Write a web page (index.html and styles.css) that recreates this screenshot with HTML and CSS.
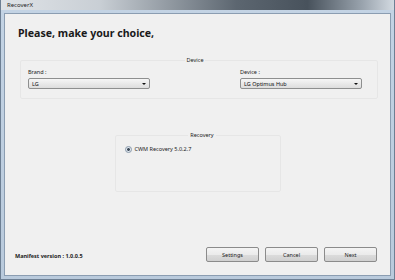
FILE: index.html
```html
<!DOCTYPE html>
<html>
<head>
  <meta charset="UTF-8">
  <link rel="stylesheet" href="styles.css">
  <title>RecoverX</title>
</head>
<body>
  <div class="window">
    <div class="titlebar">RecoverX</div>
    <div class="client">
      <h1>Please, make your choice,</h1>
      <fieldset class="group device-group">
        <legend>Device</legend>
        <div class="field">
          <label>Brand :</label>
          <div class="combo"><span>LG</span><span class="arrow"></span></div>
        </div>
        <div class="field">
          <label>Device :</label>
          <div class="combo"><span>LG Optimus Hub</span><span class="arrow"></span></div>
        </div>
      </fieldset>
      <fieldset class="group recovery-group">
        <legend>Recovery</legend>
        <div class="radio-row"><span class="radio"></span>CWM Recovery 5.0.2.7</div>
      </fieldset>
      <div class="footer">
        <div class="manifest">Manifest version : 1.0.0.5</div>
        <div class="buttons">
          <button>Settings</button>
          <button>Cancel</button>
          <button>Next</button>
        </div>
      </div>
    </div>
  </div>
</body>
</html>
```

FILE: styles.css
```css
body {
  margin: 0;
  font-family: "Noto Sans", "DejaVu Sans", sans-serif;
}
.window {
  width: 395px;
  height: 280px;
  box-sizing: border-box;
  padding: 0 3px 3px 3px;
  display: flex;
  flex-direction: column;
  background: linear-gradient(to bottom, transparent 0, transparent 10px, #c3d3e4 10px, #b9cadc 100%),
    linear-gradient(to right, #dfe3e7 0, #c9cfd5 25%, #5c6670 60%, #48525c 78%, #9aa4ae 92%, #d3dae1 100%);
  border-left: 1px solid #6d7f93;
  border-right: 1px solid #6d7f93;
  border-bottom: 1px solid #6d7f93;
}
.titlebar {
  height: 13px;
  font-size: 6px;
  line-height: 11px;
  padding-left: 3px;
  color: #222;
}
.client {
  flex: 1;
  background: #f0f0f0;
  border: 1px solid #8b9db1;
  display: flex;
  flex-direction: column;
}
h1 {
  font-size: 10.6px;
  font-weight: bold;
  margin: 10px 0 0 13px;
  line-height: 18px;
  color: #1a1a1a;
}
.group {
  border: 1px solid #e6e6e6;
  border-radius: 2px;
  margin: 0;
  padding: 0;
  box-sizing: border-box;
}
legend {
  font-size: 5.5px;
  color: #222;
  margin: 0 auto;
  padding: 0 2px;
}
.device-group {
  margin: 14px 12px 0 15px;
  height: 43px;
  display: flex;
  justify-content: space-between;
  padding: 2px 15px 0 7px;
}
.field {
  display: flex;
  flex-direction: column;
  gap: 2px;
  width: 122px;
  margin-top: 3px;
}
label {
  font-size: 5.5px;
  color: #222;
  line-height: 7px;
}
.combo {
  height: 11px;
  box-sizing: border-box;
  border: 1px solid #8e8f8f;
  border-radius: 2px;
  background: linear-gradient(to bottom, #f6f6f6, #dddddd);
  display: flex;
  align-items: center;
  justify-content: space-between;
  padding: 0 3px;
  font-size: 5.5px;
  color: #111;
}
.arrow {
  width: 0;
  height: 0;
  border-left: 2px solid transparent;
  border-right: 2px solid transparent;
  border-top: 2px solid #111;
}
.recovery-group {
  align-self: center;
  width: 166px;
  height: 61px;
  margin-top: 32px;
  padding: 6px 0 0 9px;
}
.radio-row {
  display: flex;
  align-items: center;
  gap: 3px;
  font-size: 5.5px;
  color: #222;
}
.radio {
  width: 5px;
  height: 5px;
  border-radius: 50%;
  border: 1px solid #8a9aaa;
  background: radial-gradient(circle, #3c4a58 0, #3c4a58 1.2px, #dfe6ee 1.6px);
}
.footer {
  margin-top: auto;
  margin-bottom: 13px;
  display: flex;
  justify-content: space-between;
  align-items: center;
  padding: 0 13px 0 10px;
}
.manifest {
  font-size: 5.5px;
  font-weight: bold;
  color: #222;
  margin-top: 2px;
}
.buttons {
  display: flex;
  gap: 6px;
}
button {
  width: 53px;
  height: 15px;
  font-family: "Noto Sans", "DejaVu Sans", sans-serif;
  font-size: 5.5px;
  color: #222;
  border: 1px solid #8b8b8b;
  border-radius: 2px;
  background: linear-gradient(to bottom, #f4f4f4 0, #ebebeb 50%, #dcdcdc 51%, #d0d0d0 100%);
  padding: 0;
}
```
